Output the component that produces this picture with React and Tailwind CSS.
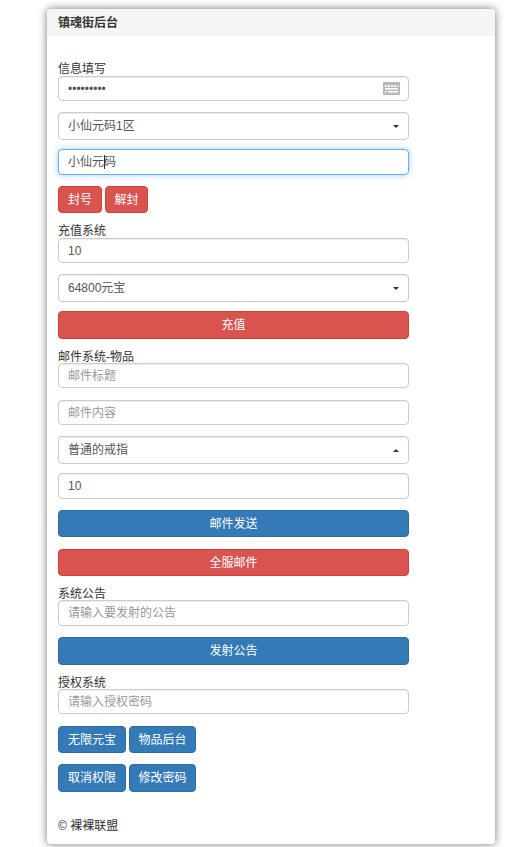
const F = "[font-family:'Liberation_Sans','Noto_Sans_CJK_SC',sans-serif]";

function Label({ children, className = "" }) {
  return <div className={`text-xs leading-[14px] text-[#333] ${className}`}>{children}</div>;
}

function Field({ value, placeholder, h = "h-[25px]", className = "", focus = false, children }) {
  return (
    <div
      className={`${h} relative w-[351px] flex items-center justify-between pl-[9px] pr-[8px] rounded border bg-white text-xs ${
        focus
          ? "border-[#66afe9] shadow-[0_0_6px_rgba(102,175,233,0.6)]"
          : "border-[#ccc] shadow-[inset_0_1px_1px_rgba(0,0,0,0.075)]"
      } ${className}`}
    >
      {value ? <span className="text-[#555]">{value}</span> : <span className="text-[#999]">{placeholder}</span>}
      {children}
    </div>
  );
}

function Caret({ up = false }) {
  return (
    <span
      className={`w-0 h-0 mr-[1px] border-x-[3px] border-x-transparent ${
        up ? "border-b-[3px] border-b-[#333]" : "border-t-[3px] border-t-[#333]"
      }`}
    />
  );
}

function Btn({ children, color = "blue", full = false, h = "h-[27px]", className = "" }) {
  const c =
    color === "red"
      ? "bg-[#d9534f] border-[#d43f3a]"
      : "bg-[#337ab7] border-[#2e6da4]";
  return (
    <div
      className={`${h} ${full ? "w-[351px]" : ""} ${c} flex items-center justify-center rounded border text-xs text-white ${className}`}
    >
      {children}
    </div>
  );
}

function Keyboard() {
  return (
    <svg width="17" height="13" viewBox="0 0 17 13" className="shrink-0">
      <rect width="17" height="13" fill="#b8b8b8" />
      <path
        d="M2 3h2v2H2zM5 3h2v2H5zM8 3h2v2H8zM11 3h2v2h-2zM14 3h1.500v2H14zM2 6h13v1.500H2zM2 9h1.500v1.500H2zM5 9h10v1.500H5z"
        fill="#fff"
      />
    </svg>
  );
}

export default function App() {
  return (
    <div className={`${F} w-[521px] h-[847px] overflow-hidden bg-white pt-[9px] pl-[47px]`}>
      <div className="w-[448px] h-[835px] rounded-[4px] bg-white shadow-[0_0_8px_rgba(0,0,0,0.55)] text-[#333]">
        <div className="h-[27px] rounded-t-[4px] bg-[#f5f5f5] pl-[11px] flex items-center text-xs font-bold text-[#333]">
          镇魂街后台
        </div>
        <div className="pl-[11px] pt-[27px]">
          <div className="h-[13px] text-xs leading-3 text-[#333]">信息填写</div>
          <Field value="•••••••••">
            <Keyboard />
          </Field>
          <Field value="小仙元码1区" h="h-[28px]" className="mt-[11px]">
            <Caret />
          </Field>
          <Field value="小仙元码" h="h-[26px]" className="mt-[9px]" focus>
            <span className="absolute left-[45px] top-[5px] h-[14px] w-px bg-[#333]" />
          </Field>
          <div className="mt-[11px] flex gap-[3px]">
            <Btn color="red" className="w-[44px]">封号</Btn>
            <Btn color="red" className="w-[43px]">解封</Btn>
          </div>

          <Label className="mt-[11px]">充值系统</Label>
          <Field value="10" />
          <Field value="64800元宝" h="h-[28px]" className="mt-[11px]">
            <Caret />
          </Field>
          <Btn color="red" full h="h-[28px]" className="mt-[9px]">充值</Btn>

          <Label className="mt-[11px] mb-[-1px]">邮件系统-物品</Label>
          <Field placeholder="邮件标题" />
          <Field placeholder="邮件内容" className="mt-3" />
          <Field value="普通的戒指" h="h-[28px]" className="mt-[11px]">
            <Caret up />
          </Field>
          <Field value="10" h="h-[26px]" className="mt-[9px]" />
          <Btn color="blue" full className="mt-[11px]">邮件发送</Btn>
          <Btn color="red" full className="mt-3">全服邮件</Btn>

          <Label className="mt-[11px] mb-[-1px]">系统公告</Label>
          <Field placeholder="请输入要发射的公告" h="h-[26px]" />
          <Btn color="blue" full h="h-[28px]" className="mt-[11px]">发射公告</Btn>

          <Label className="mt-[11px] mb-[-1px]">授权系统</Label>
          <Field placeholder="请输入授权密码" />
          <div className="mt-3 flex gap-[3px]">
            <Btn className="w-[68px]">无限元宝</Btn>
            <Btn className="w-[67px]">物品后台</Btn>
          </div>
          <div className="mt-[11px] flex gap-[3px]">
            <Btn h="h-[28px]" className="w-[68px]">取消权限</Btn>
            <Btn h="h-[28px]" className="w-[67px]">修改密码</Btn>
          </div>
          <div className="mt-[27px] text-xs leading-[14px] text-[#333]">© 裸裸联盟</div>
        </div>
      </div>
    </div>
  );
}
